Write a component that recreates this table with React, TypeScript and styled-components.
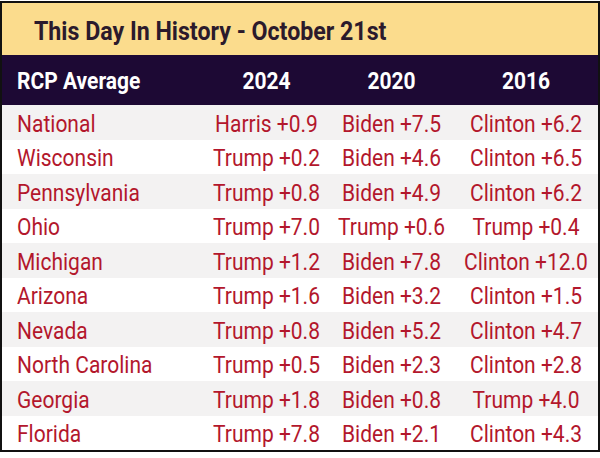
import React from "react";
import styled, { createGlobalStyle } from "styled-components";

const Global = createGlobalStyle`
  html, body { margin: 0; padding: 0; background: #ffffff; }
  body { font-family: Roboto, "Liberation Sans", Arial, sans-serif; }
`;

const Frame = styled.div`
  width: 600px;
  box-sizing: border-box;
  margin-top: 1px;
  border: 2.5px solid #111111;
  background: #ffffff;
`;

const TitleBar = styled.div`
  height: 52px;
  background: #fbdc8d;
  display: flex;
  align-items: center;
  padding-left: 32px;
  padding-top: 4px;
  box-sizing: border-box;
  font-weight: 700;
  font-size: 23.2px;
  color: #2b1a2c;
`;

const TitleText = styled.span`
  display: inline-block;
  transform: scaleY(1.1);
`;

const cols = "202px 125px 125px 1fr";

const HeaderRow = styled.div`
  height: 50px;
  background: #1d0934;
  display: grid;
  grid-template-columns: ${cols};
  align-items: center;
  color: #ffffff;
  font-weight: 700;
  font-size: 21px;
  padding-top: 2px;
  box-sizing: border-box;
`;

const Row = styled.div<{ $shade: boolean }>`
  height: 34.5px;
  display: grid;
  grid-template-columns: ${cols};
  align-items: center;
  background: ${(p) => (p.$shade ? "#f3f2f2" : "#ffffff")};
  color: #b3172c;
  font-size: 21px;
  padding-top: 3px;
  box-sizing: border-box;
`;

const Label = styled.div`
  padding-left: 15px;
  white-space: nowrap;
  transform: scaleY(1.1);
  transform-origin: center;
`;

const Cell = styled.div`
  text-align: center;
  white-space: nowrap;
  transform: scaleY(1.1);
  transform-origin: center;
`;

const rows: [string, string, string, string][] = [
  ["National", "Harris +0.9", "Biden +7.5", "Clinton +6.2"],
  ["Wisconsin", "Trump +0.2", "Biden +4.6", "Clinton +6.5"],
  ["Pennsylvania", "Trump +0.8", "Biden +4.9", "Clinton +6.2"],
  ["Ohio", "Trump +7.0", "Trump +0.6", "Trump +0.4"],
  ["Michigan", "Trump +1.2", "Biden +7.8", "Clinton +12.0"],
  ["Arizona", "Trump +1.6", "Biden +3.2", "Clinton +1.5"],
  ["Nevada", "Trump +0.8", "Biden +5.2", "Clinton +4.7"],
  ["North Carolina", "Trump +0.5", "Biden +2.3", "Clinton +2.8"],
  ["Georgia", "Trump +1.8", "Biden +0.8", "Trump +4.0"],
  ["Florida", "Trump +7.8", "Biden +2.1", "Clinton +4.3"],
];

export default function App() {
  return (
    <>
      <Global />
      <Frame>
        <TitleBar>
          <TitleText>This Day In History - October 21st</TitleText>
        </TitleBar>
        <HeaderRow>
          <Label>RCP Average</Label>
          <Cell>2024</Cell>
          <Cell>2020</Cell>
          <Cell>2016</Cell>
        </HeaderRow>
        {rows.map((r, i) => (
          <Row key={r[0]} $shade={i % 2 === 0}>
            <Label>{r[0]}</Label>
            <Cell>{r[1]}</Cell>
            <Cell>{r[2]}</Cell>
            <Cell>{r[3]}</Cell>
          </Row>
        ))}
      </Frame>
    </>
  );
}
